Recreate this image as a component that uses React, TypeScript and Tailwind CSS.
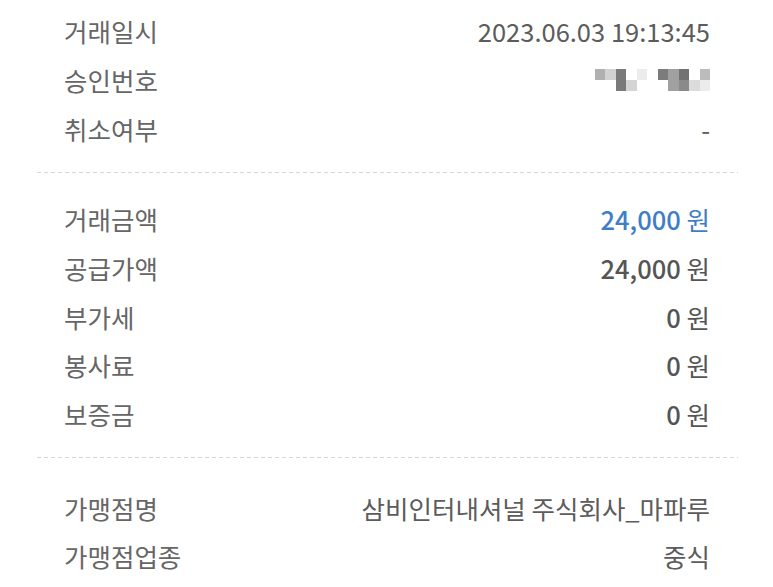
const rows1 = [
  { label: "거래일시", value: "2023.06.03 19:13:45" },
  { label: "승인번호", value: "__masked__" },
  { label: "취소여부", value: "-" },
];

const rows2 = [
  { label: "거래금액", amount: "24,000", blue: true },
  { label: "공급가액", amount: "24,000" },
  { label: "부가세", amount: "0" },
  { label: "봉사료", amount: "0" },
  { label: "보증금", amount: "0" },
];

const rows3 = [
  { label: "가맹점명", value: "삼비인터내셔널 주식회사_마파루" },
  { label: "가맹점업종", value: "중식" },
];

// blurred approval number, 2 rows of cells
const mask = [
  ["#b0b0b0", "#d2d2d2", "#7a7a7a", "#ffffff", "#ececec", "#ffffff", "#7c7c7c", "#a0a0a0", "#727272", "#ffffff", "#bcbcbc"],
  ["#ffffff", "#ffffff", "#7a7a7a", "#d4d4d4", "#ffffff", "#ffffff", "#ffffff", "#a0a0a0", "#8a8a8a", "#dcdcdc", "#ececec"],
];

function Masked() {
  return (
    <div className="flex flex-col">
      {mask.map((r, i) => (
        <div key={i} className="flex">
          {r.map((c, j) => (
            <div key={j} className="w-[10.5px] h-[11px]" style={{ backgroundColor: c }} />
          ))}
        </div>
      ))}
    </div>
  );
}

function Divider() {
  return (
    <div className="ml-[37px] mr-[35px] h-px bg-[repeating-linear-gradient(to_right,#d6d6d6_0_4px,transparent_4px_7px)]" />
  );
}

export default function App() {
  return (
    <div className="w-[773px] h-[587px] bg-white overflow-hidden font-['Noto_Sans_CJK_KR','Noto_Sans',sans-serif] text-[25.5px] text-[#666]">
      <div className="pl-[64px] pr-[63px] pt-[7px] pb-[19px]">
        {rows1.map((r) => (
          <div key={r.label} className="flex items-center justify-between h-[48.7px]">
            <span>{r.label}</span>
            {r.value === "__masked__" ? <Masked /> : <span className="text-[#5c5c5c]">{r.value}</span>}
          </div>
        ))}
      </div>
      <Divider />
      <div className="pl-[64px] pr-[63px] pt-[22px] pb-[18px]">
        {rows2.map((r) => (
          <div key={r.label} className="flex items-center justify-between h-[48.7px]">
            <span>{r.label}</span>
            <span className={r.blue ? "text-[#3f7ec6]" : "text-[#555]"}>
              <span className="font-medium">{r.amount}</span> 원
            </span>
          </div>
        ))}
      </div>
      <Divider />
      <div className="pl-[64px] pr-[63px] pt-[26px]">
        {rows3.map((r) => (
          <div key={r.label} className="flex items-center justify-between h-[48.7px]">
            <span>{r.label}</span>
            <span className="text-[#5c5c5c]">{r.value}</span>
          </div>
        ))}
      </div>
    </div>
  );
}
